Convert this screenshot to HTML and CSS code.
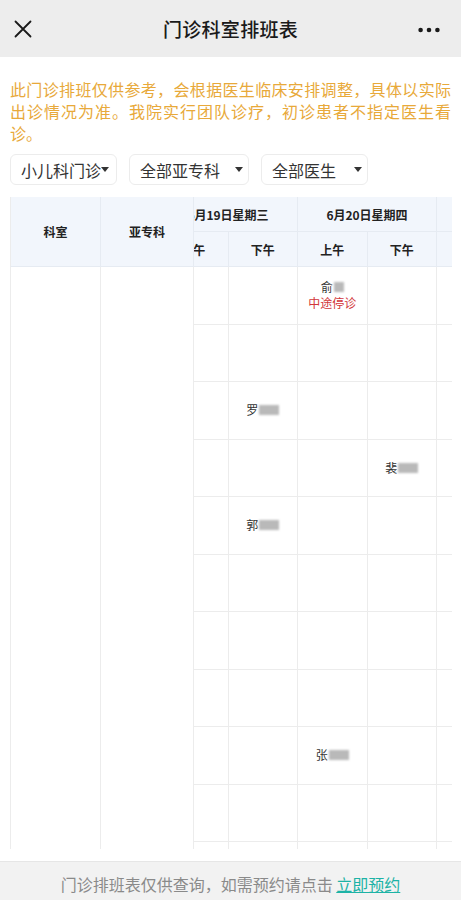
FILE: index.html
```html
<!DOCTYPE html>
<html lang="zh-CN">
<head>
<meta charset="utf-8">
<meta name="viewport" content="width=device-width, initial-scale=1">
<title>门诊科室排班表</title>
<link rel="stylesheet" href="styles.css">
</head>
<body>
<div class="page">
  <header class="nav">
    <div class="nav-left">
      <svg class="icon-close" width="18" height="18" viewBox="0 0 18 18"><path d="M1.5 1.5 L16.5 16.5 M16.5 1.5 L1.5 16.5" stroke="#1a1a1a" stroke-width="1.8" fill="none" stroke-linecap="round"/></svg>
    </div>
    <div class="nav-title">门诊科室排班表</div>
    <div class="nav-right">
      <svg width="22" height="6" viewBox="0 0 22 6"><circle cx="2.6" cy="3" r="2.3" fill="#1a1a1a"/><circle cx="11" cy="3" r="2.3" fill="#1a1a1a"/><circle cx="19.4" cy="3" r="2.3" fill="#1a1a1a"/></svg>
    </div>
  </header>

  <p class="notice">此门诊排班仅供参考，会根据医生临床安排调整，具体以实际出诊情况为准。我院实行团队诊疗，初诊患者不指定医生看诊。</p>

  <div class="filters">
    <div class="select s1"><span>小儿科门诊</span><i class="caret"></i></div>
    <div class="select s2"><span>全部亚专科</span><i class="caret"></i></div>
    <div class="select s3"><span>全部医生</span><i class="caret"></i></div>
  </div>

  <div class="table">
    <div class="frozen">
      <div class="fh c1">科室</div>
      <div class="fh c2">亚专科</div>
      <div class="fb c1"></div>
      <div class="fb c2"></div>
    </div>
    <div class="scroll">
      <div class="grid">
        <div class="hd date">6月19日星期三</div>
        <div class="hd date">6月20日星期四</div>
        <div class="hd date">6月21日星期五</div>
        <div class="hd">上午</div><div class="hd">下午</div>
        <div class="hd">上午</div><div class="hd">下午</div>
        <div class="hd">上午</div><div class="hd">下午</div>

        <div class="cell"></div><div class="cell"></div>
        <div class="cell"><span class="nm">俞<span class="redact">某</span></span><span class="stop">中途停诊</span></div><div class="cell"></div>
        <div class="cell"></div><div class="cell"></div>

        <div class="cell"></div><div class="cell"></div><div class="cell"></div><div class="cell"></div><div class="cell"></div><div class="cell"></div>

        <div class="cell"></div><div class="cell"><span class="nm">罗<span class="redact">某某</span></span></div><div class="cell"></div><div class="cell"></div><div class="cell"></div><div class="cell"></div>

        <div class="cell"></div><div class="cell"></div><div class="cell"></div><div class="cell"><span class="nm">裴<span class="redact">某某</span></span></div><div class="cell"></div><div class="cell"></div>

        <div class="cell"></div><div class="cell"><span class="nm">郭<span class="redact">某某</span></span></div><div class="cell"></div><div class="cell"></div><div class="cell"></div><div class="cell"></div>

        <div class="cell"></div><div class="cell"></div><div class="cell"></div><div class="cell"></div><div class="cell"></div><div class="cell"></div>

        <div class="cell"></div><div class="cell"></div><div class="cell"></div><div class="cell"></div><div class="cell"></div><div class="cell"></div>

        <div class="cell"></div><div class="cell"></div><div class="cell"></div><div class="cell"></div><div class="cell"></div><div class="cell"></div>

        <div class="cell"></div><div class="cell"></div><div class="cell"><span class="nm">张<span class="redact">某某</span></span></div><div class="cell"></div><div class="cell"></div><div class="cell"></div>

        <div class="cell"></div><div class="cell"></div><div class="cell"></div><div class="cell"></div><div class="cell"></div><div class="cell"></div>

        <div class="cell"></div><div class="cell"></div><div class="cell"></div><div class="cell"></div><div class="cell"></div><div class="cell"></div>
      </div>
    </div>
  </div>

  <footer class="footer">门诊排班表仅供查询，如需预约请点击 <a class="book" href="#">立即预约</a></footer>
</div>
</body>
</html>
```

FILE: styles.css
```css
* { box-sizing: border-box; }
html, body { margin: 0; padding: 0; }
body {
  background: #ffffff;
  font-family: "Noto Sans CJK SC", "Noto Sans", sans-serif;
  color: #333;
}
.page {
  height: 100vh;
  display: flex;
  flex-direction: column;
  overflow: hidden;
}
.nav {
  flex: none;
  height: 57px;
  background: #ededed;
  display: grid;
  grid-template-columns: 1fr auto 1fr;
  align-items: center;
}
.nav-left { padding-left: 14px; display: flex; align-items: center; padding-top: 1px; }
.nav-title {
  font-size: 19px;
  font-weight: 500;
  color: #1a1a1a;
  letter-spacing: 0.3px;
}
.nav-right { display: flex; justify-content: flex-end; padding-right: 21px; padding-top: 2px; }

.notice {
  flex: none;
  margin: 0;
  padding: 21px 10px 0;
  font-size: 16px;
  line-height: 22px;
  color: #e8a93a;
  text-align: justify;
}
.filters {
  flex: none;
  display: flex;
  gap: 12px;
  padding: 10px 10px 0;
}
.select {
  height: 31px;
  border: 1px solid #ececec;
  border-radius: 6px;
  background: #fff;
  display: flex;
  align-items: center;
  justify-content: space-between;
  padding: 0 8px 0 10px;
  font-size: 16px;
  color: #333;
}
.s1 { width: 107px; padding-right: 7px; }
.s2 { width: 120px; padding-right: 5px; }
.s3 { width: 107px; padding-right: 5px; }
.caret {
  display: block;
  width: 0; height: 0;
  border-top: 5px solid #333;
  border-left: 4px solid transparent;
  border-right: 4px solid transparent;
}

.table {
  flex: 1;
  min-height: 0;
  display: flex;
  margin: 12px 9px 12px 10px;
  overflow: hidden;
}
.frozen {
  flex: none;
  width: 184px;
  display: grid;
  grid-template-columns: 91px 93px;
  grid-template-rows: 70px 1fr;
}
.fh {
  background: #f2f6fc;
  border-right: 1px solid #e6ebf2;
  border-bottom: 1px solid #e6ebf2;
  display: flex;
  align-items: center;
  justify-content: center;
  font-size: 12px;
  font-weight: 700;
  color: #222;
}
.fh.c1, .fb.c1 { border-left: 1px solid #ececec; }
.fb { border-right: 1px solid #ececec; }

.scroll {
  flex: 1;
  min-width: 0;
  overflow: hidden;
}
.grid {
  margin-left: -35px;
  display: grid;
  grid-template-columns: repeat(6, 69.5px);
  grid-template-rows: 35px 35px;
  grid-auto-rows: 57.5px;
  width: max-content;
}
.hd {
  background: #f2f6fc;
  border-right: 1px solid #e6ebf2;
  border-bottom: 1px solid #e6ebf2;
  display: flex;
  align-items: center;
  justify-content: center;
  font-size: 12px;
  font-weight: 700;
  color: #222;
  white-space: nowrap;
}
.hd.date { grid-column: span 2; }
.cell {
  border-right: 1px solid #ececec;
  border-bottom: 1px solid #ececec;
  display: flex;
  flex-direction: column;
  align-items: center;
  justify-content: center;
  font-size: 12px;
  line-height: 16px;
}
.nm { color: #333; white-space: nowrap; }
.redact {
  display: inline-block;
  color: transparent;
  background: #b9b9b9;
  filter: blur(1px);
  font-size: 9px;
  line-height: 10px;
  height: 10px;
  vertical-align: 2px;
  margin-left: 1px;
  letter-spacing: 1px;
}
.stop { color: #d2363a; }

.footer {
  flex: none;
  height: 39px;
  background: #f2f2f2;
  border-top: 1px solid #e6e6e6;
  padding-top: 11px;
  text-align: center;
  font-size: 16px;
  line-height: 22px;
  color: #8a8a8a;
}
.book {
  color: #1db3a6;
  text-decoration: underline;
}
```
